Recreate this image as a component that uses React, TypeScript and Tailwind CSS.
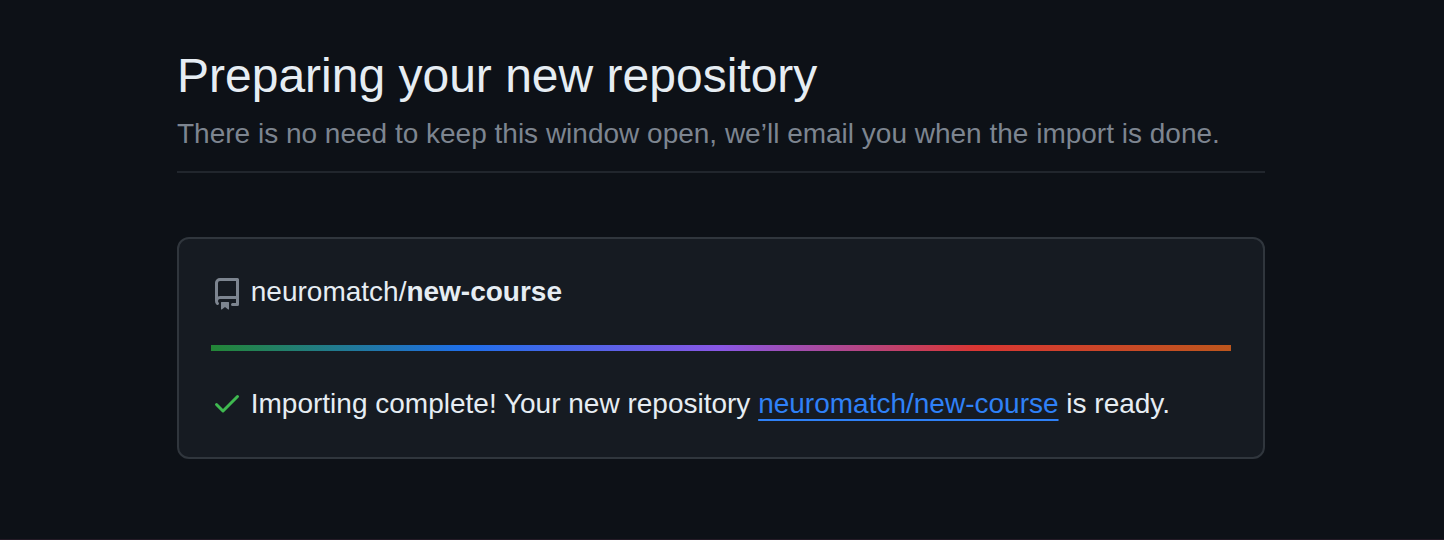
import React from "react";

function RepoIcon() {
  return (
    <svg viewBox="0 0 16 16" className="block h-8 w-8 shrink-0 fill-[#7d8590]" aria-hidden="true">
      <path d="M2 2.5A2.5 2.5 0 0 1 4.5 0h8.75a.75.75 0 0 1 .75.75v12.5a.75.75 0 0 1-.75.75h-2.5a.75.75 0 0 1 0-1.5h1.75v-2h-8a1 1 0 0 0-.714 1.7.75.75 0 1 1-1.072 1.05A2.495 2.495 0 0 1 2 11.5Zm10.5-1h-8a1 1 0 0 0-1 1v6.708A2.486 2.486 0 0 1 4.5 9h8ZM5 12.25a.25.25 0 0 1 .25-.25h3.5a.25.25 0 0 1 .25.25v3.25a.25.25 0 0 1-.4.2l-1.45-1.087a.249.249 0 0 0-.3 0L5.4 15.7a.25.25 0 0 1-.4-.2Z" />
    </svg>
  );
}

function CheckIcon() {
  return (
    <svg viewBox="0 0 16 16" className="block h-8 w-8 shrink-0 fill-[#3fb950]" aria-hidden="true">
      <path d="M13.78 4.22a.75.75 0 0 1 0 1.06l-7.25 7.25a.75.75 0 0 1-1.06 0L2.22 9.28a.751.751 0 0 1 .018-1.042.751.751 0 0 1 1.042-.018L6 10.94l6.72-6.72a.75.75 0 0 1 1.06 0Z" />
    </svg>
  );
}

export default function App() {
  return (
    <main className="h-[540px] overflow-hidden border-b border-[#241a26] bg-[#0d1117] pl-[177px] pt-[40px] font-['Liberation_Sans',Arial,sans-serif] text-[28px] leading-[42px] text-[#e6edf3]">
      <header className="w-[1088px] border-b-2 border-[#21262d] pb-4">
        <h1 className="text-[48px] leading-[72px]">Preparing your new repository</h1>
        <p className="mt-px whitespace-nowrap text-[#7d8590]">
          There is no need to keep this window open, we’ll email you when the import is done.
        </p>
      </header>
      <section className="mt-16 h-[222px] w-[1088px] rounded-xl border-2 border-[#30363d] bg-[#161b22] px-8 pt-8">
        <div className="flex gap-[7.78px]">
          <div className="pt-[7px]"><RepoIcon /></div>
          <h2>neuromatch/<strong className="font-bold">new-course</strong></h2>
        </div>
        <div className="mt-8 h-1.5 bg-[linear-gradient(to_right,#238636,#1f6feb,#8957e5,#da3633,#bd561d)]" />
        <div className="mt-8 flex gap-[7.78px]">
          <div className="pt-1"><CheckIcon /></div>
          <p className="whitespace-nowrap">
            Importing complete! Your new repository{" "}
            <a href="#" className="text-[#2f81f7] underline decoration-2 underline-offset-[6px]">neuromatch/new-course</a> is ready.
          </p>
        </div>
      </section>
    </main>
  );
}
